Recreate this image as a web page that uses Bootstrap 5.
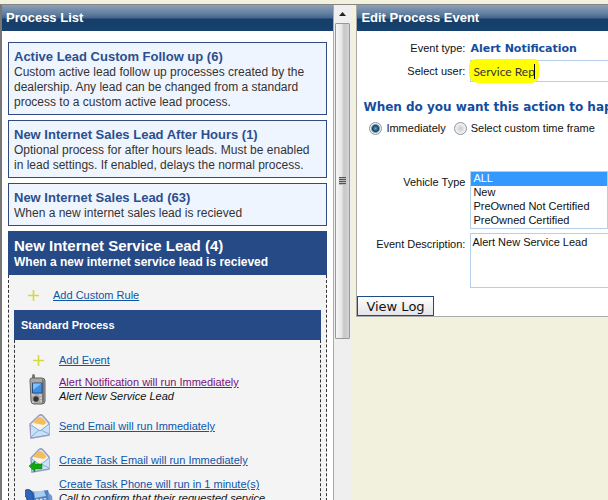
<!DOCTYPE html>
<html lang="en">
<head>
<meta charset="utf-8">
<meta name="viewport" content="width=device-width, initial-scale=1">
<title>Process List</title>
<link rel="stylesheet" href="https://cdn.jsdelivr.net/npm/bootstrap@5.3.0/dist/css/bootstrap.min.css">
<style>
body { background: #f1f1de; color: #111; font: 12px/15px "Liberation Sans", Arial, sans-serif; }
.shell { border-top: 1px solid #858585; margin-top: 4px; height: calc(100vh - 4px); }
.left-pane { flex: 0 0 55%; background: #fff; border-left: 2px solid #777; border-right: 1px solid #aaa; }
.pane-title { height: 26px; line-height: 25px; padding-left: 4px; margin: 0; font-size: 13px; font-weight: 700; color: #fff;
  background: linear-gradient(#8b9fb9 0, #5f7d9e 35%, #43648c 50%, #153e68 54%, #17426e 100%); }
.process-list { padding: 11px 6px 0; gap: 5px; }
.process-box { background: #eff5ff; border: 1px solid #2f4b80; padding: 5px 5px 4px; color: #333; font-size: 12px; }
.process-box h2 { font-size: 13px; line-height: 17px; margin: 0; font-weight: 700; color: #2c4f8d; }
.process-head { background: #264a86; color: #fff; padding: 6px 6px 5px; font-size: 12px; font-weight: 700; }
.process-head h2 { font-size: 15px; line-height: 18px; margin: 0; font-weight: 700; }
.process-body { background: #f4f4f4; border: 1px dashed #333; border-width: 0 1px; padding: 0 5px; font-size: 11px; }
.rule-row { height: 35px; padding: 5px 0 0 5px; }
.rule-icon { width: 34px; padding-left: 9px; }
.std-title { background: #264a86; color: #fff; font-size: 11px; font-weight: 700; line-height: 30px; padding-left: 7px; margin: 0; }
.std-body { border: 1px dashed #333; border-width: 0 1px; padding: 5px 0 0 10px; }
.event-row { height: 34px; line-height: 14px; }
.event-row.short-row { height: 30px; }
.event-row.noted-row { padding-bottom: 6px; }
.event-icon { flex: 0 0 34px; }
a { color: #0f55a8; }
a.seen { color: #7a117a; }
.scroll-rail { flex: 0 0 17px; background: #efefef; }
.scroll-up { height: 18px; line-height: 0; }
.scroll-thumb { height: 316px; margin: 0 1px; border: 1px solid #999; border-radius: 1px; background: linear-gradient(90deg, #f6f6f6 0, #e6e6e6 45%, #c7c7ca 60%, #d5d5d7 100%); }
.grip { width: 7px; height: 8px; background: repeating-linear-gradient(#555 0 1px, #bbb 1px 2px); }
.right-pane { margin-left: 5px; min-width: 0; }
.edit-panel { background: #fff; border: 1px solid #aaa; border-width: 0 0 1px 1px; font-size: 11px; }
.form-grid { display: grid; grid-template-columns: 108px 1fr; column-gap: 5px; }
.form-grid > label, .form-grid > .lbl { text-align: right; }
.type-row { padding-top: 10px; }
.form-grid .strong-text, .ask { font-family: "DejaVu Sans", Verdana, sans-serif; font-weight: 700; color: #154d9e; }
.strong-text { font-size: 11px; }
.ask { font-size: 12px; line-height: 16px; margin: 17px 0 6px 6px; white-space: nowrap; overflow: hidden; }
.when-row { padding-left: 12px; margin-bottom: 35px; }
.field { border: 1px solid #b5cfe8; border-radius: 0; background: #fff; color: #111; outline: 0; width: 100%; display: block; font: 11px/14px "Liberation Sans", Arial, sans-serif; }
.user-wrap { background: #fff; border: 1px solid #b5cfe8; border-right: 0; height: 22px; }
.user-field { border: 0; background: #ff0; padding: 0 4px; width: 70px; height: 24px; border-radius: 7px 5px 8px 9px; font: 12px/20px Lato, "Open Sans", sans-serif; color: #333; outline: 0; margin-left: -2px; }
.caret { width: 1px; height: 15px; background: #000; margin-left: -5px; }
select.field { overflow: hidden; height: 58px; padding: 0; }
select.field option { padding: 0 2px; min-height: 14px; height: 14px; }
select.field option:checked { background: #3399ff linear-gradient(#39f, #39f); color: #fff; }
textarea.field { height: 55px; padding: 1px; resize: none; border-right: 0; }
.radio-dot { appearance: none; width: 13px; height: 13px; margin: 0 4px 0 0; border: 1px solid #8796a5; border-radius: 50%; background: radial-gradient(#ccc, #f4f4f4 70%); }
.radio-dot:checked { background: radial-gradient(circle at 50% 50%, #6aa9cf 0, #16415f 3px, #eef2f5 5px); }
.log-btn { border: 1px solid #1f4a86; background: linear-gradient(#fff, #e4e4e8); padding: 0 8px; height: 20px; margin: 8px 0 0; font: 13px/17px "DejaVu Sans", Verdana, sans-serif; color: #111; display: block; }
</style>
<script src="https://cdn.jsdelivr.net/npm/bootstrap@5.3.0/dist/js/bootstrap.bundle.min.js"></script>
</head>
<body class="overflow-hidden">
<div class="shell d-flex overflow-hidden">
  <section class="left-pane overflow-hidden">
    <h1 class="pane-title">Process List</h1>
    <div class="process-list d-flex flex-column">
      <article class="process-box"><h2>Active Lead Custom Follow up (6)</h2>Custom active lead follow up processes created by the dealership. Any lead can be changed from a standard process to a custom active lead process.</article>
      <article class="process-box"><h2>New Internet Sales Lead After Hours (1)</h2>Optional process for after hours leads. Must be enabled in lead settings. If enabled, delays the normal process.</article>
      <article class="process-box"><h2>New Internet Sales Lead (63)</h2>When a new internet sales lead is recieved</article>
      <article>
        <div class="process-head"><h2>New Internet Service Lead (4)</h2>When a new internet service lead is recieved</div>
        <div class="process-body">
          <div class="rule-row d-flex align-items-center">
            <span class="rule-icon d-flex"><svg width="11" height="11" viewBox="0 0 11 11"><path d="M5.5 0v11M0 5.5h11" stroke="#d5da3c" stroke-width="1.6"/></svg></span>
            <a href="#">Add Custom Rule</a>
          </div>
          <h3 class="std-title">Standard Process</h3>
          <div class="std-body">
            <div class="event-row short-row d-flex align-items-center">
              <span class="event-icon d-flex ps-2"><svg width="11" height="11" viewBox="0 0 11 11"><path d="M5.5 0v11M0 5.5h11" stroke="#d5da3c" stroke-width="1.6"/></svg></span>
              <a href="#">Add Event</a>
            </div>
            <div class="event-row noted-row d-flex align-items-center">
              <span class="event-icon ps-1"><svg width="18" height="31" viewBox="0 0 18 31"><path d="M3 1.5q0-1.500 1.500-1.500t1.500 1.500v4H3z" fill="#777"/><path d="M1 6q0-2 2-2h10q3 0 3 3v20q0 3-3 3H5q-3 0-3-3z" fill="#aaa8a5" stroke="#626364"/><path d="M13 5q2 0 2 3v19q0 2-2 2z" fill="#777"/><path d="M3.500 9h9.500v10H3.500z" fill="#3f8fe8" stroke="#274f80"/><path d="M4 9.500h8.500L4 16z" fill="#83c0fa"/><circle cx="7" cy="25" r="2.700" fill="#333"/><path d="M2.500 21h3M10 21h3M11 24h2M11 27h2M3 28h2" stroke="#e3e3e3"/></svg></span>
              <div><a class="seen" href="#">Alert Notification will run Immediately</a><br><em>Alert New Service Lead</em></div>
            </div>
            <div class="event-row d-flex align-items-center">
              <span class="event-icon ps-1"><svg width="23" height="25" viewBox="0 0 23 25"><path d="M1 10L10 1.500Q12 0 14 2l6 7v12L2 24z" fill="#dcecfc" stroke="#9a9bc2" stroke-width="1.500"/><path d="M4 10l7-7 7 6-1 3-6 3-7-3z" fill="#fff5de"/><path d="M4.500 9q6-12 13 0l-3 2z" fill="#f4bd5d"/><path d="M2 11l9 6 9-7v10L2 23z" fill="#c6e2fb"/><path d="M2 11l9 6 9-7M2 23l8-7M20 20l-8-4" fill="none" stroke="#86a9d8"/></svg></span>
              <a href="#">Send Email will run Immediately</a>
            </div>
            <div class="event-row d-flex align-items-center">
              <span class="event-icon ps-1"><svg width="23" height="25" viewBox="0 0 23 25"><path d="M2 10L10 1.500Q12 0 14 2l6 7v12L3 24z" fill="#dcecfc" stroke="#9a9bc2" stroke-width="1.500"/><path d="M4 10l7-7 7 6-1 3-6 3-7-3z" fill="#fff5de"/><path d="M4.500 9q6-12 13 0l-3 2z" fill="#f4bd5d"/><path d="M3 11l8 6 9-7v10L3 23z" fill="#c6e2fb"/><path d="M3 11l8 6 9-7M20 20l-8-4" fill="none" stroke="#86a9d8"/><path d="M0 18l6-5v3h7v5H6v3z" fill="#14a514" stroke="#087d08" stroke-width=".5"/></svg></span>
              <a href="#">Create Task Email will run Immediately</a>
            </div>
            <div class="event-row d-flex align-items-start">
              <span class="event-icon d-flex pt-2"><svg class="flex-shrink-0" width="32" height="30" viewBox="2 -3 32 30"><path d="M1 4q5-4 10 0l14-2 3 11-2 9-18 3z" fill="#4c7fc5"/><path d="M0 6q2-6 7-4l3 4 1 12q-2 5-6 2L4 10z" fill="#2f65b8" stroke="#234f93"/><path d="M11 3h10l2 5-11 2z" fill="#a8cdee"/><path d="M13 11l10-1 1 9-9 2z" fill="#d0e2f2"/><path d="M14 13l9-1M14 16l9-1M16 10l1 10M20 10l1 9" stroke="#3a69ad"/><path d="M25 4l4 4 1 8-4 3z" fill="#7598cc"/></svg></span>
              <div class="text-nowrap"><a href="#">Create Task Phone will run in 1 minute(s)</a><br><em>Call to confirm that their requested service</em></div>
            </div>
          </div>
        </div>
      </article>
    </div>
  </section>
  <div class="scroll-rail d-flex flex-column" aria-hidden="true">
    <div class="scroll-up d-flex justify-content-center align-items-center"><svg width="7" height="4" viewBox="0 0 7 4"><path d="M0 4L3.500 0 7 4z" fill="#222"/></svg></div>
    <div class="scroll-thumb d-flex align-items-center justify-content-center"><div class="grip"></div></div>
  </div>
  <section class="right-pane flex-fill">
    <form class="edit-panel">
      <h1 class="pane-title">Edit Process Event</h1>
      <div class="form-grid type-row">
        <span class="lbl">Event type:</span><span class="strong-text">Alert Notification</span>
      </div>
      <div class="form-grid align-items-center mt-1">
        <label for="user">Select user:</label>
        <div class="user-wrap d-flex align-items-center"><input class="user-field" id="user" type="text" value="Service Rep"><span class="caret"></span></div>
      </div>
      <h2 class="ask">When do you want this action to happen?</h2>
      <div class="when-row d-flex align-items-center">
        <input class="radio-dot" type="radio" name="when" id="now" checked><label class="me-2" for="now">Immediately</label>
        <input class="radio-dot" type="radio" name="when" id="custom"><label for="custom">Select custom time frame</label>
      </div>
      <div class="form-grid">
        <label class="pt-1" for="vehicle">Vehicle Type</label>
        <select class="field" id="vehicle" size="4" multiple><option selected>ALL</option><option>New</option><option>PreOwned Not Certified</option><option>PreOwned Certified</option></select>
      </div>
      <div class="form-grid mt-1">
        <label class="pt-1" for="desc">Event Description:</label>
        <textarea class="field" id="desc">Alert New Service Lead</textarea>
      </div>
      <button class="log-btn" type="button">View Log</button>
    </form>
  </section>
</div>
</body>
</html>
